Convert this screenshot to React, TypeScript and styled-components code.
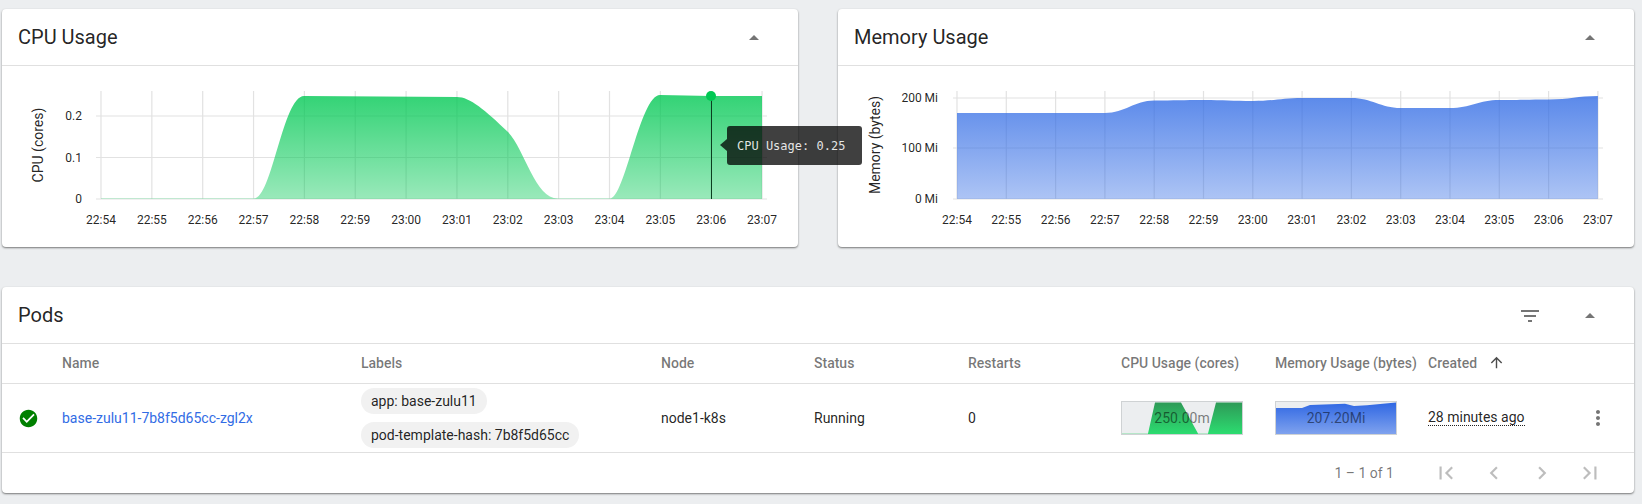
// App.tsx

import React from 'react';
import styled, { createGlobalStyle } from 'styled-components';

const GlobalStyle = createGlobalStyle`
  html, body {
    margin: 0;
    padding: 0;
    background-color: #eceef0;
    font-family: Roboto, "Liberation Sans", sans-serif;
    color: rgba(0, 0, 0, 0.87);
  }
`;

const Page = styled.div`
  display: grid;
  grid-template-columns: 1fr 1fr;
  gap: 40px;
  padding: 9px 8px 11px 2px;
  width: 1642px;
  box-sizing: border-box;
`;

const Card = styled.section<{ $wide?: boolean; $raised?: boolean }>`
  position: relative;
  z-index: ${(p) => (p.$raised ? 2 : 1)};
  grid-column: ${(p) => (p.$wide ? '1 / -1' : 'auto')};
  background-color: #ffffff;
  border-radius: 4px;
  box-shadow: 0 1px 2px rgba(0, 0, 0, 0.5);
`;

const CardHeader = styled.header`
  display: flex;
  align-items: center;
  height: 56px;
  padding: 0 32px 0 16px;
  border-bottom: 1px solid #e0e0e0;
`;

const CardTitle = styled.h2`
  flex: 1;
  margin: 0;
  font-size: 20px;
  font-weight: 400;
`;

const ChartSvg = styled.svg`
  display: block;
  width: 796px;
  height: 181px;

  text {
    font-family: Roboto, "Liberation Sans", sans-serif;
    font-size: 12px;
    fill: rgba(0, 0, 0, 0.87);
  }

  .axis-title {
    font-size: 14px;
  }
`;

const Tooltip = styled.div`
  position: absolute;
  left: 725px;
  top: 117px;
  width: 135px;
  height: 39px;
  display: flex;
  align-items: center;
  padding-left: 10px;
  box-sizing: border-box;
  border-radius: 3px;
  background-color: rgba(0, 0, 0, 0.75);
  color: rgba(255, 255, 255, 0.88);
  font-family: "DejaVu Sans Mono", "Liberation Mono", monospace;
  font-size: 12px;

  &::before {
    content: '';
    position: absolute;
    left: -7px;
    top: 13px;
    border-style: solid;
    border-width: 6.5px 7px 6.5px 0;
    border-color: transparent rgba(0, 0, 0, 0.75) transparent transparent;
  }
`;

const IconSvg = styled.svg<{ $size: number; $color: string }>`
  display: block;
  flex: none;
  width: ${(p) => p.$size}px;
  height: ${(p) => p.$size}px;
  fill: ${(p) => p.$color};
`;

const HeaderAction = styled.div<{ $gap?: number }>`
  margin-top: 2px;
  margin-right: ${(p) => p.$gap ?? 0}px;
`;

const TableRow = styled.div<{ $height: number; $head?: boolean }>`
  display: grid;
  grid-template-columns: 60px 299px 300px 153px 154px 153px 154px 153px 1fr;
  align-items: center;
  box-sizing: border-box;
  height: ${(p) => p.$height}px;
  padding-bottom: ${(p) => (p.$head ? 2 : 0)}px;
  border-bottom: 1px solid #e0e0e0;
  font-size: 14px;
`;

const HeadCell = styled.div`
  display: flex;
  align-items: center;
  font-weight: 500;
  color: rgba(0, 0, 0, 0.54);
`;

const SortArrow = styled.span`
  margin-left: 11px;
`;

const StatusCell = styled.div`
  padding-left: 16px;
`;

const NameLink = styled.a`
  color: #326ce5;
  text-decoration: none;
`;

const ChipList = styled.div`
  display: flex;
  flex-direction: column;
  align-items: flex-start;
  gap: 8px;
`;

const Chip = styled.span`
  display: inline-flex;
  align-items: center;
  height: 26px;
  padding: 0 10px;
  border-radius: 13px;
  background-color: #f1f1f1;
`;

const Spark = styled.div`
  position: relative;
  width: 122px;
  height: 34px;
  box-sizing: border-box;
  border: 1px solid #cfd2d4;
  background-color: #eceef0;

  svg {
    display: block;
    width: 120px;
    height: 32px;
  }
`;

const SparkValue = styled.span`
  position: absolute;
  inset: 0;
  display: flex;
  align-items: center;
  justify-content: center;
  color: rgba(0, 0, 0, 0.5);
`;

const CreatedCell = styled.div`
  display: flex;
  align-items: center;
  justify-content: space-between;
  padding: 0 24px 0 0;
`;

const Age = styled.span`
  border-bottom: 1px dotted rgba(0, 0, 0, 0.87);
  line-height: 15px;
`;

const Footer = styled.footer`
  display: flex;
  align-items: center;
  justify-content: flex-end;
  height: 40px;
  padding-right: 20px;
  font-size: 14px;
  color: rgba(0, 0, 0, 0.54);
`;

const PageRange = styled.span`
  margin-right: 28px;
`;

const PagerButton = styled.span`
  display: flex;
  justify-content: center;
  width: 48px;
`;

const ARROW_UP = 'M7 14l5-5 5 5z';
const FILTER = 'M10 18h4v-2h-4v2zM3 6v2h18V6H3zm3 7h12v-2H6v2z';
const CHECK_CIRCLE =
  'M12 2C6.48 2 2 6.48 2 12s4.48 10 10 10 10-4.48 10-10S17.52 2 12 2zm-2 15l-5-5 1.41-1.41L10 14.17l7.59-7.59L19 8l-9 9z';
const SORT_UP = 'M4 12l1.41 1.41L11 7.83V20h2V7.83l5.58 5.59L20 12l-8-8-8 8z';
const MORE_VERT =
  'M12 8c1.1 0 2-.9 2-2s-.9-2-2-2-2 .9-2 2 .9 2 2 2zm0 2c-1.1 0-2 .9-2 2s.9 2 2 2 2-.9 2-2-.9-2-2-2zm0 6c-1.1 0-2 .9-2 2s.9 2 2 2 2-.9 2-2-.9-2-2-2z';
const FIRST_PAGE = 'M18.41 16.59L13.82 12l4.59-4.59L17 6l-6 6 6 6zM6 6h2v12H6z';
const PREV_PAGE = 'M15.41 7.41L14 6l-6 6 6 6 1.41-1.41L10.83 12z';
const NEXT_PAGE = 'M10 6L8.59 7.41 13.17 12l-4.58 4.59L10 18l6-6z';
const LAST_PAGE = 'M5.59 7.41L10.18 12l-4.59 4.59L7 18l6-6-6-6zM16 6h2v12h-2z';

const Icon = ({ d, size = 24, color = 'rgba(0,0,0,0.54)' }: { d: string; size?: number; color?: string }) => (
  <IconSvg viewBox="0 0 24 24" $size={size} $color={color}>
    <path d={d} />
  </IconSvg>
);

const TIMES = [
  '22:54', '22:55', '22:56', '22:57', '22:58', '22:59', '23:00',
  '23:01', '23:02', '23:03', '23:04', '23:05', '23:06', '23:07',
];

const CPU_AREA =
  'M101 199 L101 198.5 L254 198.5 C272 198.5 283 96 304 96 L457 97 C470 97 485 110 508 132 ' +
  'C525 150 535 198.5 558 198.5 L610 198.5 C625 198.5 640 95 660 95 L711 96 L762 96 L762 199 Z';

const MEMORY_LEVELS = [113, 113, 113, 113, 100.5, 100, 101, 98, 98, 108, 108, 100, 99.5, 96];

const memoryAreaPath = () => {
  const xAt = (i: number) => 957 + 49.3 * i;
  let d = `M957 199 L957 ${MEMORY_LEVELS[0]}`;
  for (let i = 1; i < MEMORY_LEVELS.length; i++) {
    d += ` C${xAt(i) - 29} ${MEMORY_LEVELS[i - 1]} ${xAt(i) - 20} ${MEMORY_LEVELS[i]} ${xAt(i)} ${MEMORY_LEVELS[i]}`;
  }
  return `${d} L${xAt(13)} 199 Z`;
};

type ChartProps = {
  id: string;
  originX: number;
  firstX: number;
  stepX: number;
  gridLeft: number;
  gridRight: number;
  color: string;
  area: string;
  axisTitle: string;
  axisX: number;
  tickX: number;
  ticks: { y: number; label: string }[];
  children?: React.ReactNode;
};

const Chart = ({
  id, originX, firstX, stepX, gridLeft, gridRight, color, area, axisTitle, axisX, tickX, ticks, children,
}: ChartProps) => (
  <ChartSvg viewBox={`${originX} 66 796 181`}>
    <defs>
      <linearGradient id={id} x1="0" y1="0" x2="0" y2="1">
        <stop offset="0%" stopColor={color} stopOpacity={0.8} />
        <stop offset="100%" stopColor={color} stopOpacity={0.4} />
      </linearGradient>
    </defs>
    {TIMES.map((time, i) => (
      <line key={time} x1={firstX + stepX * i} x2={firstX + stepX * i} y1={91} y2={199} stroke="#e2e2e2" strokeWidth={1.2} />
    ))}
    {ticks.map((tick) => (
      <line key={tick.label} x1={gridLeft} x2={gridRight} y1={tick.y} y2={tick.y} stroke="#e2e2e2" strokeWidth={1.2} />
    ))}
    <path d={area} fill={`url(#${id})`} />
    {ticks.map((tick) => (
      <text key={tick.label} x={tickX} y={tick.y + 4} textAnchor="end">{tick.label}</text>
    ))}
    {TIMES.map((time, i) => (
      <text key={time} x={firstX + stepX * i} y={224} textAnchor="middle">{time}</text>
    ))}
    <text
      className="axis-title"
      x={axisX}
      y={145}
      textAnchor="middle"
      transform={`rotate(-90 ${axisX} 145)`}
      dy="5"
    >
      {axisTitle}
    </text>
    {children}
  </ChartSvg>
);

const CpuSpark = () => (
  <svg viewBox="0 0 120 32">
    <defs>
      <linearGradient id="sparkCpu" x1="0" y1="0" x2="0" y2="1">
        <stop offset="0%" stopColor="#2e9a57" />
        <stop offset="100%" stopColor="#2cdc70" />
      </linearGradient>
    </defs>
    <path d="M0 32 L0 31.4 L26 31.4 L33 0.5 L59 0.5 L76 31.4 L86 31.4 L94 0.5 L120 0.5 L120 32 Z" fill="url(#sparkCpu)" />
    <path d="M0 31.5 L26 31.5 M76 31.5 L86 31.5" stroke="#b5e6c8" strokeWidth={1} />
  </svg>
);

const MemorySpark = () => (
  <svg viewBox="0 0 120 32">
    <defs>
      <linearGradient id="sparkMem" x1="0" y1="0" x2="0" y2="1">
        <stop offset="0%" stopColor="#2f67e3" />
        <stop offset="100%" stopColor="#7fa2ee" />
      </linearGradient>
    </defs>
    <path d="M0 6 L26 6 L34 3 L69 1.7 L78 4 L91 3.3 L120 0.5 L120 32 L0 32 Z" fill="url(#sparkMem)" />
  </svg>
);

const App = () => (
  <>
    <GlobalStyle />
    <Page>
      <Card $raised>
        <CardHeader>
          <CardTitle>CPU Usage</CardTitle>
          <HeaderAction>
            <Icon d={ARROW_UP} />
          </HeaderAction>
        </CardHeader>
        <Chart
          id="cpuArea"
          originX={2}
          firstX={101}
          stepX={50.85}
          gridLeft={96}
          gridRight={767}
          color="#00c853"
          area={CPU_AREA}
          axisTitle="CPU (cores)"
          axisX={38}
          tickX={82}
          ticks={[
            { y: 116, label: '0.2' },
            { y: 157.5, label: '0.1' },
            { y: 199, label: '0' },
          ]}
        >
          <line x1={711.5} x2={711.5} y1={96} y2={199} stroke="#0b3d20" strokeWidth={1} />
          <circle cx={711} cy={96} r={5} fill="#00c853" />
        </Chart>
        <Tooltip>CPU Usage: 0.25</Tooltip>
      </Card>

      <Card>
        <CardHeader>
          <CardTitle>Memory Usage</CardTitle>
          <HeaderAction>
            <Icon d={ARROW_UP} />
          </HeaderAction>
        </CardHeader>
        <Chart
          id="memoryArea"
          originX={838}
          firstX={957}
          stepX={49.3}
          gridLeft={953}
          gridRight={1603}
          color="#326ce5"
          area={memoryAreaPath()}
          axisTitle="Memory (bytes)"
          axisX={875}
          tickX={938}
          ticks={[
            { y: 98, label: '200 Mi' },
            { y: 148, label: '100 Mi' },
            { y: 199, label: '0 Mi' },
          ]}
        />
      </Card>

      <Card $wide>
        <CardHeader>
          <CardTitle>Pods</CardTitle>
          <HeaderAction $gap={36}>
            <Icon d={FILTER} />
          </HeaderAction>
          <HeaderAction>
            <Icon d={ARROW_UP} />
          </HeaderAction>
        </CardHeader>

        <TableRow $height={40} $head>
          <span />
          <HeadCell>Name</HeadCell>
          <HeadCell>Labels</HeadCell>
          <HeadCell>Node</HeadCell>
          <HeadCell>Status</HeadCell>
          <HeadCell>Restarts</HeadCell>
          <HeadCell>CPU Usage (cores)</HeadCell>
          <HeadCell>Memory Usage (bytes)</HeadCell>
          <HeadCell>
            Created
            <SortArrow>
              <Icon d={SORT_UP} size={17} color="rgba(0,0,0,0.7)" />
            </SortArrow>
          </HeadCell>
        </TableRow>

        <TableRow $height={69}>
          <StatusCell>
            <Icon d={CHECK_CIRCLE} size={21} color="#008000" />
          </StatusCell>
          <div>
            <NameLink href="#">base-zulu11-7b8f5d65cc-zgl2x</NameLink>
          </div>
          <ChipList>
            <Chip>app: base-zulu11</Chip>
            <Chip>pod-template-hash: 7b8f5d65cc</Chip>
          </ChipList>
          <div>node1-k8s</div>
          <div>Running</div>
          <div>0</div>
          <Spark>
            <CpuSpark />
            <SparkValue>250.00m</SparkValue>
          </Spark>
          <Spark>
            <MemorySpark />
            <SparkValue>207.20Mi</SparkValue>
          </Spark>
          <CreatedCell>
            <Age>28 minutes ago</Age>
            <Icon d={MORE_VERT} />
          </CreatedCell>
        </TableRow>

        <Footer>
          <PageRange>1 – 1 of 1</PageRange>
          {[FIRST_PAGE, PREV_PAGE, NEXT_PAGE, LAST_PAGE].map((d) => (
            <PagerButton key={d}>
              <Icon d={d} size={26} color="rgba(0,0,0,0.26)" />
            </PagerButton>
          ))}
        </Footer>
      </Card>
    </Page>
  </>
);

export default App;
